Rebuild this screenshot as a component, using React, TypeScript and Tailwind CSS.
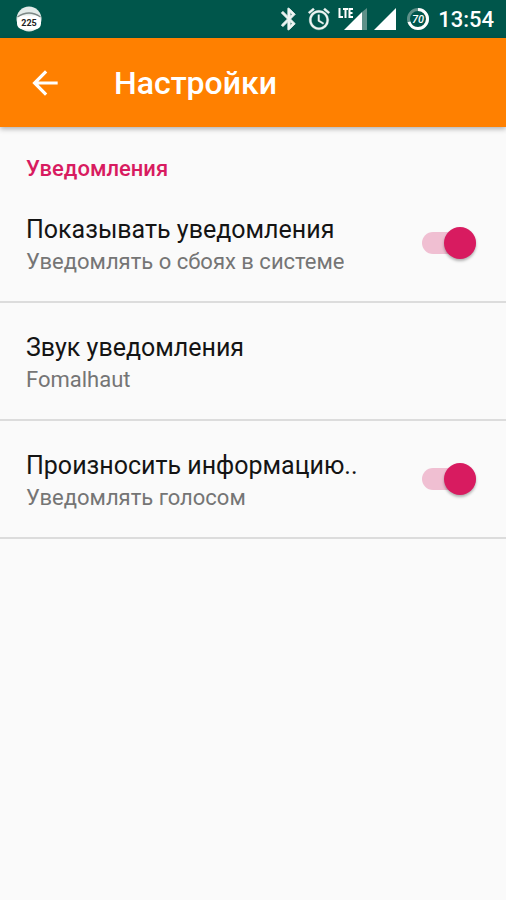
import { useState } from "react";

function AppBadgeIcon() {
  return (
    <svg width="28" height="28" viewBox="0 0 28 28" aria-hidden="true">
      <circle cx="14" cy="14" r="12.500" fill="#e3ebe9" />
      <path d="M2.500 12 Q14 4 25.500 12" fill="none" stroke="#7c8785" strokeWidth="1.500" />
      <rect x="2" y="10.500" width="24" height="14" rx="6" fill="#fff" />
      <text x="14" y="21" textAnchor="middle" fontSize="9" fontWeight="700" fill="#222">
        225
      </text>
    </svg>
  );
}

function BluetoothIcon() {
  return (
    <svg width="26" height="26" viewBox="0 0 24 24" fill="#eef5f3" stroke="#eef5f3" strokeWidth="0.9" aria-hidden="true">
      <path d="M17.710 7.710 12 2h-1v7.590L6.410 5 5 6.410 10.590 12 5 17.590 6.410 19 11 14.410V22h1l5.710-5.710-4.300-4.290 4.300-4.290zM13 5.830l1.880 1.880L13 9.590V5.830zm1.880 10.460L13 18.170v-3.760l1.880 1.880z" />
    </svg>
  );
}

function AlarmIcon() {
  return (
    <svg width="26" height="26" viewBox="0 0 24 24" fill="#eef5f3" stroke="#eef5f3" strokeWidth="0.3" aria-hidden="true">
      <path d="m22 5.720-4.600-3.860-1.290 1.530 4.600 3.860L22 5.720zM7.880 3.390 6.600 1.860 2 5.710l1.290 1.530 4.590-3.850zM12.500 8H11v6l4.750 2.850.75-1.230-4-2.370V8zM12 4c-4.970 0-9 4.030-9 9s4.020 9 9 9a9 9 0 0 0 0-18zm0 16c-3.870 0-7-3.130-7-7s3.130-7 7-7 7 3.130 7 7-3.130 7-7 7z" />
    </svg>
  );
}

function LteSignalIcon() {
  return (
    <svg width="30" height="26" viewBox="0 0 30 26" aria-hidden="true">
      <path d="M6 24 24 6V24Z" fill="#fff" />
      <path d="M24 6 29 2V24H24Z" fill="#5f9189" />
      <path
        d="M1.500 2V11H5M5 3H10M7.500 3V12M15 3H11.500V11H15M11.500 7H14.500"
        fill="none"
        stroke="#fff"
        strokeWidth="2"
      />
    </svg>
  );
}

function SignalIcon() {
  return (
    <svg width="22" height="26" viewBox="0 0 22 26" aria-hidden="true">
      <path d="M0 24 22 2V24Z" fill="#fff" />
    </svg>
  );
}

function BatteryIcon() {
  return (
    <svg width="24" height="24" viewBox="0 0 24 24" aria-label="70%">
      <circle cx="12" cy="12" r="9.500" fill="none" stroke="#5f9189" strokeWidth="3" />
      <circle
        cx="12"
        cy="12"
        r="9.500"
        fill="none"
        stroke="#fff"
        strokeWidth="3"
        pathLength="100"
        strokeDasharray="70 30"
        transform="rotate(-90 12 12)"
      />
      <text x="12" y="16" textAnchor="middle" fontSize="11" fontWeight="500" fontStyle="italic" fill="#fff">
        70
      </text>
    </svg>
  );
}

function StatusBar() {
  return (
    <div className="flex h-[38px] items-center justify-between bg-[#00564b] px-3 text-white">
      <span className="ml-[3px] flex"><AppBadgeIcon /></span>
      <div className="flex items-center">
        <BluetoothIcon />
        <span className="ml-1 flex"><AlarmIcon /></span>
        <span className="ml-[6px] flex"><LteSignalIcon /></span>
        <span className="ml-[6px] flex"><SignalIcon /></span>
        <span className="ml-[10px] flex"><BatteryIcon /></span>
        <span className="ml-2 pt-0.5 text-[22px] leading-7 font-medium">13:54</span>
      </div>
    </div>
  );
}

function Switch({ label, id }: { label: string; id: string }) {
  const [on, setOn] = useState(true);
  return (
    <label htmlFor={id} className="shrink-0 cursor-pointer">
      <input
        id={id}
        type="checkbox"
        role="switch"
        aria-label={label}
        checked={on}
        onChange={(e) => setOn(e.target.checked)}
        className="peer sr-only"
      />
      <span className="flex h-[22px] w-[54px] items-center rounded-full bg-[#bdbdbd] peer-checked:justify-end peer-checked:bg-[#f0bfd2]">
        <span className="size-8 shrink-0 rounded-full bg-[#d81b60] shadow-[0_2px_3px_rgba(0,0,0,0.3)]" />
      </span>
    </label>
  );
}

function Row({ title, summary, switchId }: { title: string; summary: string; switchId?: string }) {
  const text = (
    <span className="flex min-w-0 flex-col pt-[29px] pb-[23px] text-left">
      <span className="truncate text-[25px] leading-8 text-[#141414]">{title}</span>
      <span className="truncate text-[22px] leading-8 text-[#757575]">{summary}</span>
    </span>
  );
  return (
    <li className="border-b-2 border-[#dcdcdc]">
      {switchId ? (
        <div className="flex items-center justify-between gap-4 pr-[30px] pl-[26px]">
          {text}
          <Switch id={switchId} label={title} />
        </div>
      ) : (
        <button type="button" className="flex w-full pr-[30px] pl-[26px]">
          {text}
        </button>
      )}
    </li>
  );
}

export default function App() {
  return (
    <div className="min-h-screen bg-[#fafafa] font-['Roboto',sans-serif]">
      <StatusBar />
      <header className="flex h-[89px] items-center bg-[#ff8000] pl-[26px] text-white shadow-[0_2px_5px_rgba(0,0,0,0.3)]">
        <button type="button" aria-label="Назад" className="flex">
          <svg width="38" height="38" viewBox="0 0 24 24" fill="currentColor" aria-hidden="true">
            <path d="M20 11H7.830l5.590-5.590L12 4l-8 8 8 8 1.410-1.410L7.830 13H20v-2z" />
          </svg>
        </button>
        <h1 className="ml-[50px] text-[32px] leading-10 font-medium">Настройки</h1>
      </header>
      <main>
        <h2 className="px-[26px] pt-[26px] text-[22px] leading-8 font-medium text-[#d81b60]">Уведомления</h2>
        <ul>
          <Row title="Показывать уведомления" summary="Уведомлять о сбоях в системе" switchId="show" />
          <Row title="Звук уведомления" summary="Fomalhaut" />
          <Row title="Произносить информацию.." summary="Уведомлять голосом" switchId="speak" />
        </ul>
      </main>
    </div>
  );
}
